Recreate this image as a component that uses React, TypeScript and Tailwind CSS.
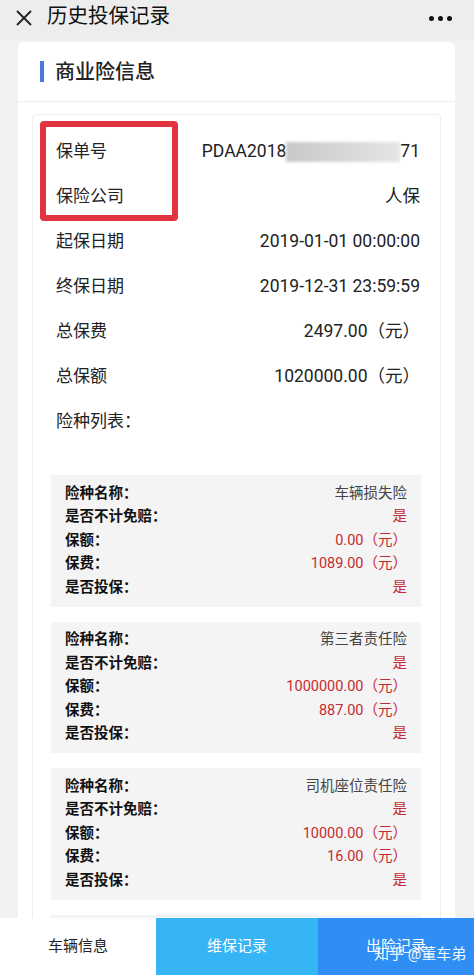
import React from 'react';

const font = { fontFamily: '"Roboto", "Noto Sans CJK SC", sans-serif' };

type Item = { name: string; amount: string; fee: string };

const items: Item[] = [
  { name: '车辆损失险', amount: '0.00（元）', fee: '1089.00（元）' },
  { name: '第三者责任险', amount: '1000000.00（元）', fee: '887.00（元）' },
  { name: '司机座位责任险', amount: '10000.00（元）', fee: '16.00（元）' },
  { name: '乘客座位责任险', amount: '10000.00（元）', fee: '41.00（元）' },
];

function InfoRow({ label, value }: { label: string; value: React.ReactNode }) {
  return (
    <div className="flex items-center justify-between h-[45px] text-[17px] text-[#222]">
      <span>{label}</span>
      <span className="text-right text-[17.5px]">{value}</span>
    </div>
  );
}

function ItemCard({ item }: { item: Item }) {
  const rows = [
    { label: '险种名称：', value: item.name, red: false },
    { label: '是否不计免赔：', value: '是', red: true },
    { label: '保额：', value: item.amount, red: true },
    { label: '保费：', value: item.fee, red: true },
    { label: '是否投保：', value: '是', red: true },
  ];
  return (
    <div className="bg-[#f4f4f4] px-[14px] py-[7px]">
      {rows.map((r) => (
        <div key={r.label} className="flex items-center justify-between h-[23.5px]">
          <span className="font-bold text-[14.5px] text-[#111]">{r.label}</span>
          <span className={r.red ? 'text-[14.5px] text-[#c42b32]' : 'text-[14.5px] text-[#444]'}>{r.value}</span>
        </div>
      ))}
    </div>
  );
}

export default function App() {
  return (
    <div className="relative w-[474px] h-[975px] overflow-hidden bg-[#f2f2f2]" style={font}>
      {/* Header */}
      <div className="h-[40px] bg-[#ededed] flex items-center px-[15px]">
        <svg width="18" height="18" viewBox="0 0 18 18" className="mt-[-4px]">
          <path d="M2 2 L16 16 M16 2 L2 16" stroke="#222" strokeWidth="1.8" />
        </svg>
        <span className="ml-[14px] text-[20.5px] text-[#111] mt-[-7px]">历史投保记录</span>
        <div className="ml-auto flex gap-[4px] mr-[7px] mt-[-4px]">
          <span className="w-[5px] h-[5px] rounded-full bg-[#111]"></span>
          <span className="w-[5px] h-[5px] rounded-full bg-[#111]"></span>
          <span className="w-[5px] h-[5px] rounded-full bg-[#111]"></span>
        </div>
      </div>

      {/* Outer card */}
      <div className="mx-[18px] mt-[2px] bg-white rounded-t-[6px] w-[437px]">
        <div className="h-[60px] flex items-center pl-[22px] border-b border-[#eeeeee]">
          <span className="w-[4px] h-[21px] bg-[#4a78dc]"></span>
          <span className="ml-[11px] text-[20px] font-medium text-[#222]">商业险信息</span>
        </div>

        <div className="relative mx-[14px] mt-[12px] border border-[#efefef] rounded-[4px] pl-[23px] pr-[20px] pt-[14px]">
          {/* Red annotation box */}
          <div className="absolute left-[7px] top-[6px] w-[138px] h-[100px] border-[6px] border-[#e1343e] rounded-[4px]"></div>

          <InfoRow
            label="保单号"
            value={
              <span className="flex items-center">
                PDAA2018
                <span className="inline-block w-[114px] h-[20px] bg-gradient-to-r from-[#c9c9c9] via-[#d6d6d6] to-[#e6e6e6] blur-[1.5px]"></span>
                71
              </span>
            }
          />
          <InfoRow label="保险公司" value="人保" />
          <InfoRow label="起保日期" value="2019-01-01 00:00:00" />
          <InfoRow label="终保日期" value="2019-12-31 23:59:59" />
          <InfoRow label="总保费" value="2497.00（元）" />
          <InfoRow label="总保额" value="1020000.00（元）" />
          <InfoRow label="险种列表：" value="" />

          <div className="flex flex-col gap-[15px] mt-[31px] -ml-[5px] -mr-[1px] pb-[20px]">
            {items.map((it) => (
              <ItemCard key={it.name} item={it} />
            ))}
          </div>
        </div>
      </div>

      {/* Bottom tab bar */}
      <div className="absolute left-0 bottom-0 w-full h-[57px] flex text-[15px]">
        <div className="w-[156px] bg-white flex items-center justify-center text-[#222]">车辆信息</div>
        <div className="w-[162px] bg-[#35b5f6] flex items-center justify-center text-white">维保记录</div>
        <div className="flex-1 bg-[#2e8ef3] flex items-center justify-center text-white relative">
          出险记录
          <span className="absolute left-[56px] top-[25px] text-[15px] text-white/95 whitespace-nowrap">知乎 @董车弟</span>
        </div>
      </div>
    </div>
  );
}
